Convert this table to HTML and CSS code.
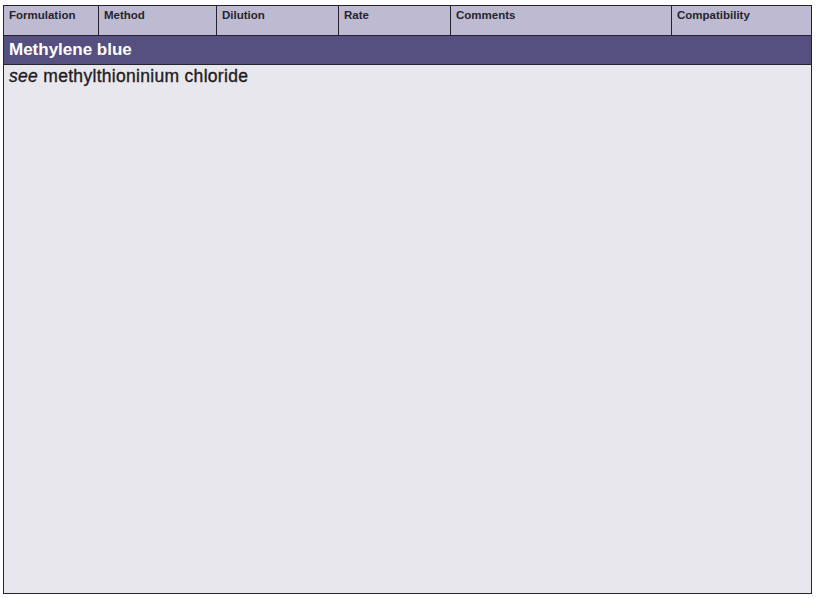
FILE: index.html
```html
<!DOCTYPE html>
<html lang="en">
<head>
    <meta charset="UTF-8">
    <title>Methylene blue</title>
    <link rel="stylesheet" href="styles.css">
</head>
<body>
    <table class="drug-table">
        <colgroup>
            <col class="c-form">
            <col class="c-method">
            <col class="c-dil">
            <col class="c-rate">
            <col class="c-comm">
            <col class="c-compat">
        </colgroup>
        <thead>
            <tr>
                <th>Formulation</th>
                <th>Method</th>
                <th>Dilution</th>
                <th>Rate</th>
                <th>Comments</th>
                <th>Compatibility</th>
            </tr>
        </thead>
        <tbody>
            <tr class="drug-name">
                <td colspan="6">Methylene blue</td>
            </tr>
            <tr class="drug-body">
                <td colspan="6"><em>see</em> methylthioninium chloride</td>
            </tr>
        </tbody>
    </table>
</body>
</html>
```

FILE: styles.css
```css
:root {
    --line: #25232f;
    --head: #bdbad1;
    --band: #55507f;
    --paper: #e8e7ee;
}

* {
    box-sizing: border-box;
    margin: 0;
    padding: 0;
}

body {
    background: #ffffff;
    font-family: "Liberation Sans", Arial, sans-serif;
    color: #222028;
    padding: 5px 0 0 3px;
}

.drug-table {
    border-collapse: collapse;
    table-layout: fixed;
    width: 808px;
}

.c-form { width: 95px; }
.c-method { width: 118px; }
.c-dil { width: 122px; }
.c-rate { width: 112px; }
.c-comm { width: 221px; }
.c-compat { width: 140px; }

th {
    background: var(--head);
    border: 1px solid var(--line);
    height: 30px;
    padding: 3px 5px 0;
    text-align: left;
    vertical-align: top;
    font-size: 11.5px;
    font-weight: bold;
    color: #26242e;
}

.drug-name td {
    background: var(--band);
    color: #ffffff;
    border: 1px solid var(--line);
    height: 29px;
    padding: 0 5px;
    font-size: 17px;
    font-weight: bold;
}

.drug-body td {
    background: var(--paper);
    border: 1px solid var(--line);
    border-top: none;
    height: 529px;
    padding: 1px 5px 0;
    vertical-align: top;
    font-size: 17.5px;
    letter-spacing: 0.3px;
    color: #1e1c24;
    -webkit-text-stroke: 0.35px #1e1c24;
}
```
